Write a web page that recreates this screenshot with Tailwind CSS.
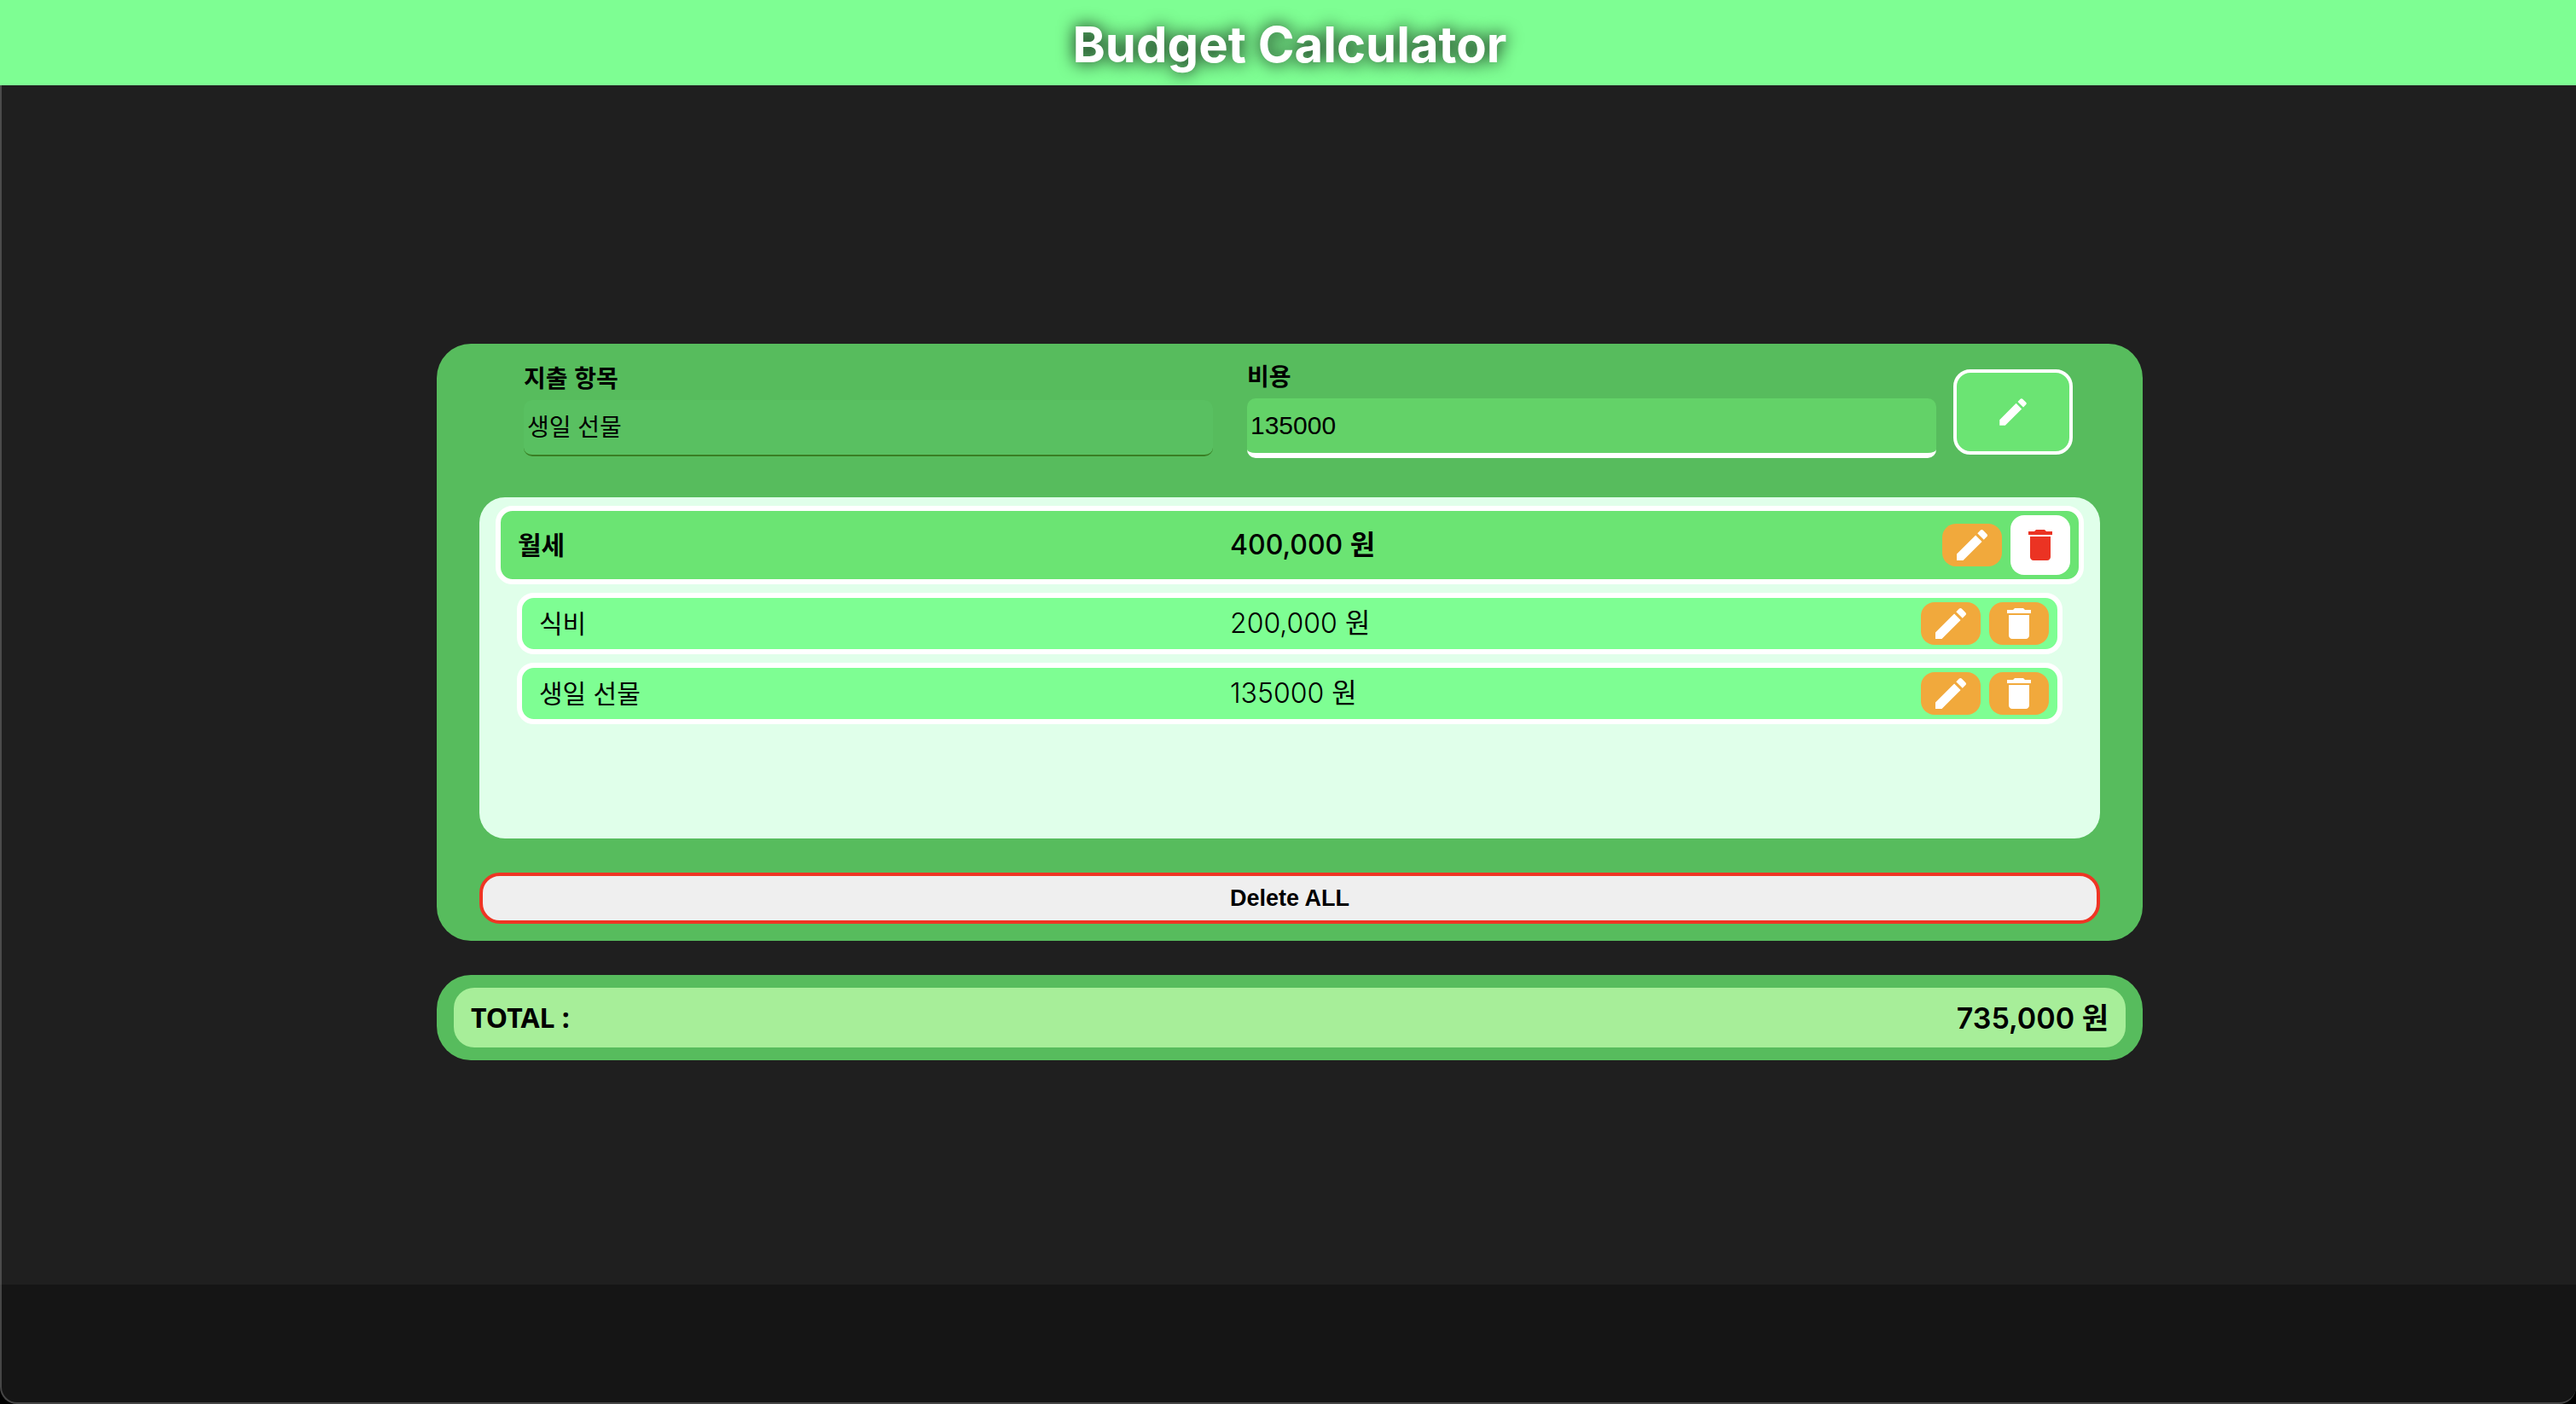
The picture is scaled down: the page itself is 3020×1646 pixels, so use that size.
<!DOCTYPE html>
<html lang="ko">
<head>
<meta charset="utf-8">
<title>Budget Calculator</title>
<script src="https://cdn.jsdelivr.net/npm/@tailwindcss/browser@4"></script>
</head>
<body class="bg-black text-black font-['Noto_Sans_CJK_KR',sans-serif]">
<svg class="hidden" aria-hidden="true">
  <symbol id="edit" viewBox="0 0 24 24"><path d="M3 17.25V21h3.75L17.81 9.94l-3.75-3.75L3 17.25zM20.71 7.04c.39-.39.39-1.02 0-1.41l-2.34-2.34c-.39-.39-1.02-.39-1.41 0l-1.83 1.83 3.75 3.75 1.83-1.83z"/></symbol>
  <symbol id="trash" viewBox="0 0 24 24"><path d="M6 19c0 1.1.9 2 2 2h8c1.1 0 2-.9 2-2V7H6v12zM19 4h-3.5l-1-1h-5l-1 1H5v2h14V4z"/></symbol>
</svg>
<div class="flex min-h-screen flex-col">
  <header class="flex h-[100px] items-center justify-center bg-[#7efe93] pl-1 pt-1">
    <h1 class="font-['Inter',sans-serif] text-[58px] leading-[72px] font-bold text-white [text-shadow:0_0_20px_#000]">Budget Calculator</h1>
  </header>

  <main class="flex flex-1 flex-col items-center justify-center gap-10 border-l-2 border-white/20 bg-[#1f1f1f] pl-0.5 pt-10">
    <section class="w-full max-w-[2000px] rounded-[40px] bg-[#57bc5d] px-[50px] pt-[26px] pb-5">
      <form class="mb-[46px] flex items-center gap-5 pl-[52px] pr-8">
        <div class="flex flex-1 items-center gap-10">
          <div class="flex flex-1 flex-col">
            <label for="item" class="mb-4 text-[28px] leading-[22px] font-bold">지출 항목</label>
            <input id="item" type="text" value="생일 선물" class="h-[66px] w-full rounded-[10px] border-b-2 border-[#3a7f24] bg-[#59c061] px-1 pb-1 text-[28px]">
          </div>
          <div class="flex flex-1 flex-col">
            <label for="cost" class="mb-4 text-[28px] leading-[22px] font-bold">비용</label>
            <input id="cost" type="text" value="135000" class="h-[70px] w-full rounded-[10px] border-b-6 border-white bg-[#63d268] px-1 font-['Liberation_Sans',sans-serif] text-[30px]">
          </div>
        </div>
        <button type="submit" aria-label="수정" class="flex h-[100px] w-[140px] shrink-0 items-center justify-center rounded-[20px] border-4 border-white bg-[#6be473] text-white"><svg class="size-[42px] fill-current"><use href="#edit"/></svg></button>
      </form>

      <ul class="flex min-h-[400px] flex-col gap-2.5 rounded-[30px] bg-[#e0ffea] px-[44px] pt-2.5 text-[30px]">
        <li class="-mx-[25px] flex h-[92px] items-center rounded-[20px] border-6 border-white bg-[#6be473] pl-5 pr-2.5 font-bold">
          <span class="flex-1 pb-1">월세</span>
          <span class="flex-1 font-['Inter','Noto_Sans_CJK_KR',sans-serif] text-[32px] font-medium">400,000 <span class="font-bold">원</span></span>
          <span class="flex items-center gap-2.5">
            <button type="button" aria-label="수정" class="flex h-[50px] w-[70px] items-center justify-center rounded-2xl bg-[#f1a93c] text-white"><svg class="size-12 fill-current"><use href="#edit"/></svg></button>
            <button type="button" aria-label="삭제" class="flex h-[70px] w-[70px] items-center justify-center rounded-2xl bg-white text-[#eb3323]"><svg class="size-12 fill-current"><use href="#trash"/></svg></button>
          </span>
        </li>
        <li class="flex h-[72px] items-center rounded-[20px] border-6 border-white bg-[#7efe93] pl-5 pr-2.5">
          <span class="flex-1 pb-1">식비</span>
          <span class="flex-1 font-['Inter','Noto_Sans_CJK_KR',sans-serif] text-[32px] font-light">200,000 <span class="font-normal">원</span></span>
          <span class="flex items-center gap-2.5">
            <button type="button" aria-label="수정" class="flex h-[50px] w-[70px] items-center justify-center rounded-2xl bg-[#f1a93c] text-white"><svg class="size-12 fill-current"><use href="#edit"/></svg></button>
            <button type="button" aria-label="삭제" class="flex h-[50px] w-[70px] items-center justify-center rounded-2xl bg-[#f1a93c] text-white"><svg class="size-12 fill-current"><use href="#trash"/></svg></button>
          </span>
        </li>
        <li class="flex h-[72px] items-center rounded-[20px] border-6 border-white bg-[#7efe93] pl-5 pr-2.5">
          <span class="flex-1 pb-1">생일 선물</span>
          <span class="flex-1 font-['Inter','Noto_Sans_CJK_KR',sans-serif] text-[32px] font-light">135000 <span class="font-normal">원</span></span>
          <span class="flex items-center gap-2.5">
            <button type="button" aria-label="수정" class="flex h-[50px] w-[70px] items-center justify-center rounded-2xl bg-[#f1a93c] text-white"><svg class="size-12 fill-current"><use href="#edit"/></svg></button>
            <button type="button" aria-label="삭제" class="flex h-[50px] w-[70px] items-center justify-center rounded-2xl bg-[#f1a93c] text-white"><svg class="size-12 fill-current"><use href="#trash"/></svg></button>
          </span>
        </li>
      </ul>

      <button type="button" class="mt-10 h-[60px] w-full rounded-[24px] border-4 border-[#ef3524] bg-[#efefef] font-['Liberation_Sans',sans-serif] text-[27px] font-bold">Delete ALL</button>
    </section>

    <section class="w-full max-w-[2000px] rounded-[40px] bg-[#57bc5d] px-5 py-[15px]">
      <div class="flex h-[70px] items-center justify-between rounded-[24px] bg-[#a7ee99] px-5 font-bold">
        <span class="font-['Noto_Sans',sans-serif] text-[32px]">TOTAL :</span>
        <span class="font-['Inter','Noto_Sans_CJK_KR',sans-serif] text-[34px] font-semibold">735,000 원</span>
      </div>
    </section>
  </main>

  <footer class="h-[140px] rounded-b-[20px] border-b-2 border-l-2 border-[#464646] bg-[#151515]"></footer>
</div>
</body>
</html>
